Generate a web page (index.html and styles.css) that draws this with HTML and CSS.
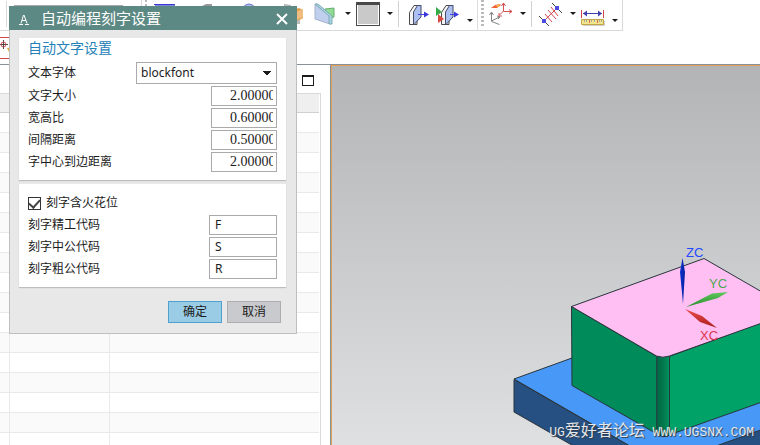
FILE: index.html
```html
<!DOCTYPE html>
<html lang="zh-CN">
<head>
<meta charset="utf-8">
<title>自动编程刻字设置</title>
<link rel="stylesheet" href="styles.css">
</head>
<body>
<div class="app">
  <header class="toolbar">
    <svg class="tools-start" viewBox="0 0 314 30" aria-hidden="true">
      <path d="M6.5 1V27M141.5 0V27" stroke="#d9d9d9"/>
      <path d="M14 5.5H123" stroke="#a8a8a8"/>
      <path d="M146 0V27" stroke="#bbb" stroke-width="2" stroke-dasharray="2 2"/>
      <path d="M154 4.5H175" stroke="#3a3ad8"/><path d="M155 5.5H175" stroke="#7b85d8"/>
      <path d="M202 6l4-2h6v3h-10z" fill="#999"/>
      <path d="M243 7q6-6 12 0z" fill="#aebdf0" stroke="#6a78c8"/>
      <path d="M284 4l7 1v2h-7z" fill="#b5b8b2"/>
      <path d="M291 10l8-2 4 2v8l-7 4-5-2z" fill="#e0a050"/><path d="M296 12l7-3v8l-7 3z" fill="#f0bd80"/><path d="M298.500 20v4" stroke="#bbb" stroke-width="3"/>
    </svg>
    <button class="tool" aria-label="剖切"><svg viewBox="0 0 24 26"><path d="M11 9l9-1v9l-9 2z" fill="#8fdc91" stroke="#68ac72"/><path d="M1 4l15 11v9L1 19z" fill="#c0cfee" stroke="#a4b3cd"/><path d="M1 4h3l14 12v8h-3v-8z" fill="#a9d5e1" stroke="#7fa9b8"/></svg></button>
    <button class="caret" aria-label="剖切选项"><i></i></button>
    <button class="tool" aria-label="窗口"><svg viewBox="0 0 24 26"><path d="M0 2h24v24H0z" fill="#484848"/><path d="M1 5h22v20H1z" fill="#fff"/><path d="M2 5h20v19H2z" fill="#c9c9c9"/></svg></button>
    <button class="caret" aria-label="窗口选项"><i></i></button>
    <span class="divider"></span>
    <span class="tool-group">
      <button class="tool" aria-label="移动面"><svg viewBox="0 0 24 26"><path d="M1.500 12.500L6 5.500h7l-4 7v12H1.500z" fill="#f4f4f4" stroke="#494949"/><path d="M5.500 12l4-6.500H13V17l-7.500 8z" fill="#adc0f2" stroke="#444c68"/><path d="M10 14.500h9" stroke="#4545dc" stroke-width="1"/><path d="M16 11.500l5 3-5 3z" fill="#3939dd"/></svg></button>
      <button class="tool" aria-label="替换面"><svg viewBox="0 0 24 26"><path d="M5.500 12.500L10 5.500h7l-4 7v12H5.500z" fill="#f4f4f4" stroke="#494949"/><path d="M9.500 12l4-6.500H17V17l-7.500 8z" fill="#adc0f2" stroke="#444c68"/><path d="M14 14.500h8" stroke="#4545dc"/><path d="M18 11.500l5 3-5 3z" fill="#3939dd"/><path d="M0 7l6 5-6 4z" fill="#36aa47"/><path d="M2 14l6 5-6 4z" fill="#d84b40"/></svg></button>
    </span>
    <button class="caret caret-low" aria-label="面选项"><i></i></button>
    <span class="edge"></span><span class="grip"></span>
    <button class="tool" aria-label="坐标系"><svg viewBox="0 0 24 26"><path d="M2 8l4-3 5-1 1 1-4 3z" fill="#ef6237"/><path d="M6 6l5-2-1 3z" fill="#f6bd55"/><path d="M14.500 3v8l-4 4M14.500 11.500H23" stroke="#d65250" fill="none"/><path d="M12.500 6l2-3 2 3M20 9.500l3 2-3 2M10 13v3h3" stroke="#d65250" fill="none"/><path d="M2.500 13v8l8-4M2.500 21.500l8 3M.500 15l2-3 2 3M8 16l3 1-2 2" stroke="#858585" fill="none"/></svg></button>
    <button class="caret" aria-label="坐标系选项"><i></i></button>
    <span class="divider"></span>
    <span class="tool-group measure">
      <button class="tool" aria-label="测量距离"><svg viewBox="0 0 24 26"><path d="M5 21L18 8M6 14l7 8M9 10l8 9M12 7l7 9" stroke="#d24950" fill="none"/><path d="M0 16l10 10M13 3l10 10" stroke="#444"/><path d="M3 19h4v4H3zM16 6h4v4h-4z" fill="#4c4cdf"/></svg></button>
    </span>
    <button class="caret" aria-label="测量选项"><i></i></button>
    <button class="tool" aria-label="标尺"><svg viewBox="0 0 24 26"><path d="M.500 10v8M22.500 10v8" stroke="#d5474d"/><path d="M2 13.500h19" stroke="#4242ae"/><path d="M2 13.500l4-3v6zM21 13.500l-4-3v6z" fill="#4242ae"/><path d="M2 21h22v5H2z" fill="#cfcfcf"/><path d="M.500 19.500h22v5H.500z" fill="#f1e690" stroke="#c1a546"/><path d="M3.500 20v2M5.500 20v2M10.500 20v2M13.500 20v2M18.500 20v2M20.500 20v2" stroke="#a8a8a0"/><path d="M8.500 20v3M16.500 20v3" stroke="#d96a55"/></svg></button>
    <button class="caret caret-low" aria-label="标尺选项"><i></i></button>
  </header>
  <div class="snapbar">
    <div class="snap"><svg viewBox="0 0 12 20" aria-hidden="true"><path d="M3.500 1v9M0 5.500h8" stroke="#444"/><circle cx="3.500" cy="5.500" r="2.500" fill="none" stroke="#c55"/><path d="M7 9l5-1v5H9z" fill="#e5a83c"/></svg></div>
  </div>
  <main class="workspace">
    <section class="panel">
      <div class="panel-head"><button class="restore" aria-label="还原"></button></div>
      <div class="grid-wrap">
        <table class="grid">
          <colgroup><col class="col-a"><col class="col-b"><col></colgroup>
          <thead><tr><th></th><th></th><th></th></tr></thead>
          <tbody>
            <tr><td></td><td></td><td></td></tr><tr><td></td><td></td><td></td></tr>
            <tr><td></td><td></td><td></td></tr><tr><td></td><td></td><td></td></tr>
            <tr><td></td><td></td><td></td></tr><tr><td></td><td></td><td></td></tr>
            <tr><td></td><td></td><td></td></tr><tr><td></td><td></td><td></td></tr>
            <tr><td></td><td></td><td></td></tr><tr><td></td><td></td><td></td></tr>
            <tr><td></td><td></td><td></td></tr><tr><td></td><td></td><td></td></tr>
            <tr><td></td><td></td><td></td></tr><tr><td></td><td></td><td></td></tr>
            <tr><td></td><td></td><td></td></tr><tr><td></td><td></td><td></td></tr>
            <tr><td></td><td></td><td></td></tr>
          </tbody>
        </table>
      </div>
    </section>
    <section class="viewport">
      <svg class="scene" viewBox="332 66 428 379" preserveAspectRatio="xMaxYMax slice">
        <defs>
          <linearGradient id="fillet"><stop offset="0" stop-color="#007d50"/><stop offset=".15" stop-color="#006b45"/><stop offset=".6" stop-color="#007c50"/><stop offset="1" stop-color="#009560"/></linearGradient>
          <linearGradient id="blue"><stop offset="0" stop-color="#0a2fd0"/><stop offset="1" stop-color="#0622a0"/></linearGradient>
          <linearGradient id="green" x2="0" y2="1"><stop offset="0" stop-color="#5cc95c"/><stop offset="1" stop-color="#2c8c2c"/></linearGradient>
          <linearGradient id="red" x2="0" y2="1"><stop offset="0" stop-color="#ee4a4a"/><stop offset="1" stop-color="#a81e1e"/></linearGradient>
        </defs>
        <g stroke="#29343c" stroke-width="1" stroke-linejoin="round">
          <path d="M514 379L572 358L762 340V460H654z" fill="#4899f7"/>
          <path d="M514 379.500V412L598 460H654z" fill="#265082"/>
          <path d="M677 460L762 429.500V460z" fill="#265082"/>
          <path d="M571.500 306.500L657 356.500V434L572 385.500z" fill="#008c5a"/>
          <path d="M669 356.500L762 322.500V402L669 435z" fill="#00a268"/>
          <path d="M657 355V433.500Q663 439 669.500 435V355z" fill="url(#fillet)"/>
          <path d="M571.500 306.500L704 258.500L762 292V323L669.500 356Q663 358.500 656.500 356z" fill="#ffbff3"/>
        </g>
        <path d="M682.500 258L685 272L683 304L680 272z" fill="url(#blue)"/>
        <path d="M686 307L712 293.500L728 292L718 298z" fill="url(#green)"/>
        <path d="M685 309L702 316L717 328L700 322z" fill="url(#red)"/>
        <g class="axes"><text x="686" y="257" fill="#2448ff">ZC</text><text x="709" y="288" fill="#4da650">YC</text><text x="700" y="340" fill="#d8384e">XC</text></g>
      </svg>
      <p class="watermark">UG<span>爱好者论坛</span> WWW.UGSNX.COM</p>
    </section>
  </main>
  <form class="dialog">
    <div class="titlebar">
      <svg class="logo" viewBox="0 0 10 12" aria-hidden="true"><path d="M4.500 1L2 9.500M5 1L8 9.500M3 6.500h4M0 10.500h4M6 10.500h4" fill="none" stroke="#fff"/></svg>
      <h1>自动编程刻字设置</h1>
      <button type="button" class="close" aria-label="关闭"><svg viewBox="0 0 12 12"><path d="M1 1L11 11M11 1L1 11" stroke="#fff" stroke-width="2"/></svg></button>
    </div>
    <div class="content">
      <fieldset class="group">
        <h2>自动文字设置</h2>
        <div class="row row-tall"><label for="font">文本字体</label><select id="font"><option>blockfont</option></select></div>
        <div class="row"><label for="size">文字大小</label><input class="num" id="size" value="2.00000"></div>
        <div class="row"><label for="ratio">宽高比</label><input class="num" id="ratio" value="0.60000"></div>
        <div class="row"><label for="gap">间隔距离</label><input class="num" id="gap" value="0.50000"></div>
        <div class="row"><label for="dist">字中心到边距离</label><input class="num" id="dist" value="2.00000"></div>
      </fieldset>
      <fieldset class="group group-codes">
        <div class="row check"><input type="checkbox" id="spark" checked><label for="spark">刻字含火花位</label></div>
        <div class="row"><label for="fine">刻字精工代码</label><input class="code" id="fine" value="F"></div>
        <div class="row"><label for="mid">刻字中公代码</label><input class="code" id="mid" value="S"></div>
        <div class="row"><label for="rough">刻字粗公代码</label><input class="code" id="rough" value="R"></div>
      </fieldset>
      <div class="actions"><button type="button" class="btn primary">确定</button><button type="button" class="btn">取消</button></div>
    </div>
  </form>
</div>
</body>
</html>
```
FILE: styles.css
```css
* { box-sizing: border-box; }
body {
  margin: 0;
  background: #fff;
  color: #1c1c1c;
  font: 12px/20px "Noto Sans", "Noto Sans CJK SC", sans-serif;
}
button, input, select { margin: 0; font: inherit; color: inherit; border-radius: 0; }
button { padding: 0; border: 0; background: none; }
svg { display: block; }

.app { position: relative; display: flex; flex-direction: column; height: 100vh; overflow: hidden; }

/* Toolbar */
.toolbar {
  display: flex;
  flex: none;
  align-self: flex-start;
  height: 31px;
  border-right: 1px solid #d9d9d9;
  border-bottom: 1px solid #d9d9d9;
}
.tools-start { width: 314px; height: 30px; flex: none; }
.tool { width: 24px; height: 26px; flex: none; }
.tool svg { width: 24px; height: 26px; }
.tool-group { display: flex; gap: 4px; padding-left: 9px; }
.measure { padding-left: 7px; }
.caret { display: flex; justify-content: center; width: 18px; height: 27px; padding: 12px 0 0 2px; flex: none; }
.caret i { border: 3px solid transparent; border-top-color: #1c1c1c; border-bottom: 0; height: 3px; }
.caret-low { width: 17px; padding-top: 19px; }
.divider { width: 1px; height: 26px; margin-top: 1px; background: #d0d0d0; }
.edge { width: 1px; background: #dedede; }
.grip { width: 3px; height: 27px; margin: 0 5px 0 3px; background: repeating-linear-gradient(#bbb 0 2px, #fff 2px 4px); }

.snapbar { flex: none; height: 34px; padding-top: 6px; border-bottom: 1px solid #87919a; }
.snap { width: 40px; height: 22px; border: solid #d2454c; border-width: 1px 0; padding-top: 1px; }
.snap svg { width: 12px; height: 20px; }

/* Workspace */
.workspace { display: flex; flex: 1; min-height: 0; }
.panel { display: flex; flex-direction: column; width: 331px; flex: none; border-right: 1px solid #87919a; overflow: hidden; }
.panel-head { display: flex; justify-content: flex-end; flex: none; height: 28px; padding: 10px 16px 0 0; }
.restore { width: 12px; height: 11px; border: 1px solid #1c1c1c; border-top-width: 2px; }
.grid-wrap { flex: none; margin-right: 9px; padding-right: 1px; border: solid #d9d9d9; border-width: 1px 1px 0 0; }
.grid { width: 100%; border-collapse: separate; border-spacing: 0; table-layout: fixed; }
.col-a { width: 10px; }
.col-b { width: 100px; }
.grid th, .grid td { height: 20px; padding: 0; border: solid #e9e9e9; border-width: 0 1px 1px 0; }
.grid th { height: 19px; background: #efefef; border-bottom-color: #d0d0d0; }
.grid th:last-child, .grid td:last-child { border-right: 0; }
.grid tbody tr:nth-child(even) { background: #fafafa; }

.viewport {
  position: relative;
  flex: 1;
  min-width: 0;
  border: solid #e5a057;
  border-width: 1px 0 0 1px;
  background: linear-gradient(#b3b4b6, #dfe0e1);
}
.scene { width: 100%; height: 100%; }
.axes { font: 13px "Liberation Sans", sans-serif; }
.watermark {
  position: absolute;
  right: 6px;
  bottom: 2px;
  margin: 0;
  font: 13px/20px "Liberation Mono", "Noto Sans CJK SC", monospace;
  color: #e5e8ec;
  white-space: nowrap;
  text-shadow: 1px 1px 1px #333b45;
}
.watermark span { font-size: 16px; }

/* Dialog */
.dialog { position: absolute; top: 6px; left: 9px; width: 288px; background: #e8e8e8; border: 1px solid #bfbfbf; border-top: 0; }
.titlebar { display: flex; align-items: center; height: 24px; margin: 0 -1px; padding: 0 9px 0 10px; background: #5c8984; color: #fff; }
.logo { width: 10px; height: 12px; margin-top: 4px; }
.titlebar h1 { flex: 1; margin: 0 0 0 12px; font-size: 15px; line-height: 24px; font-weight: 400; }
.close { width: 12px; height: 12px; margin-top: 2px; }
.content { padding: 8px 10px 10px 9px; }
.group { min-width: 0; margin: 0 0 4px; padding: 0 9px 7px; border: 0; background: #fff; box-shadow: 0 1px 1px #bdbdbd; }
.group h2 { margin: 0 0 3px; font-size: 14px; line-height: 20px; font-weight: 400; color: #2481b8; }
.row { display: flex; align-items: center; justify-content: space-between; height: 22px; }
.row-tall { height: 24px; }
.row input, .row select { height: 20px; border: 1px solid #aaa; background: #fff; outline: 0; }
.row select {
  width: 141px;
  height: 22px;
  padding: 0 4px;
  appearance: none;
  background-color: #fff;
  background-image: linear-gradient(to bottom left, #1c1c1c 50%, transparent 51%), linear-gradient(to bottom right, #1c1c1c 50%, transparent 51%);
  background-repeat: no-repeat;
  background-position: right 9px center, right 5px center;
  background-size: 4px 4px;
}
.row .num { width: 66px; padding: 0 3px 0 18px; font: 14px "Liberation Serif", serif; }
.row .code { width: 68px; padding: 0 5px; }
.group-codes { padding-top: 8px; }
.check { justify-content: flex-start; gap: 5px; }
.row.check input { display: grid; place-items: center; width: 13px; height: 13px; border-color: #333; appearance: none; }
.check input:checked::before { content: ""; width: 9px; height: 5px; margin-top: -2px; border: solid #444; border-width: 0 0 2px 2px; transform: rotate(-48deg); }
.actions { display: flex; justify-content: flex-end; gap: 5px; padding: 10px 5px 0 0; }
.btn { width: 54px; height: 22px; border: 1px solid #adadb0; background: #c9cace; }
.primary { border-color: #4fa1d0; background: #9acce5; }
```
